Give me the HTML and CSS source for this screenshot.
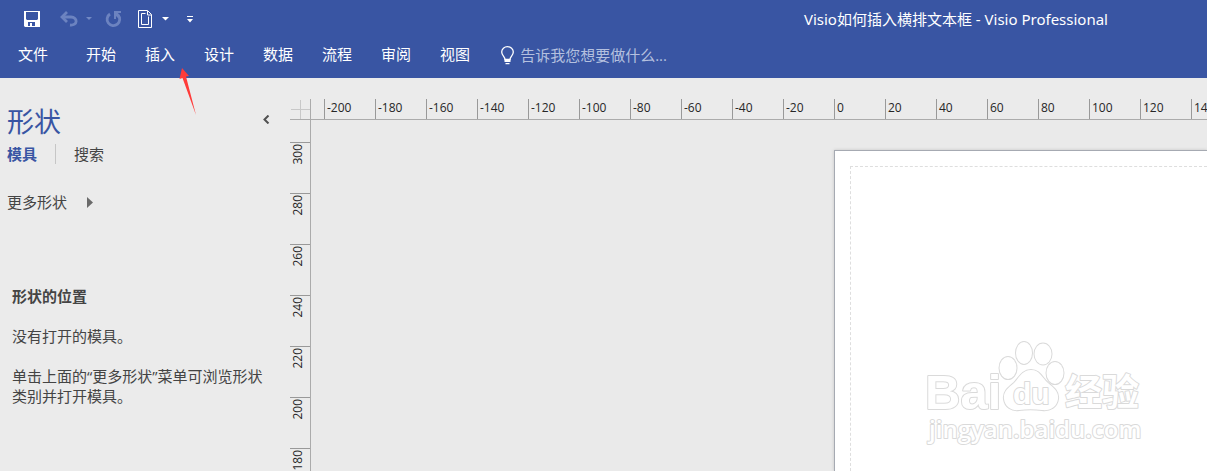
FILE: index.html
```html
<!DOCTYPE html>
<html lang="zh-CN">
<head>
<meta charset="utf-8">
<title>Visio如何插入横排文本框 - Visio Professional</title>
<link rel="stylesheet" href="styles.css">
</head>
<body>
<header class="ribbon">
  <div class="titlebar">
    <div class="quick">
      <button class="tool save" aria-label="保存"><svg width="16" height="16" viewBox="0 0 16 16"><path fill="#fff" fill-rule="evenodd" d="M0 0h16v16H1l-1-1zM2 1v7l1 1h10l1-1V1zM4 11v4h2v-3h2v3h3v-4z"/></svg></button>
      <button class="tool undo" aria-label="撤消"><svg width="32" height="16" viewBox="0 0 32 16"><g fill="none" stroke="#6c83c0" stroke-width="2.8"><path d="M2 6h9c7 0 7 9-1 8"/><path d="M7 1L2 6l5 5"/></g><path fill="#7389c4" d="M26 6h6l-3 3z"/></svg></button>
      <button class="tool redo" aria-label="重复"><svg width="17" height="17" viewBox="0 0 17 17"><path fill="none" stroke="#6c83c0" stroke-width="2.8" d="M5 3a6.300 6.300 0 1 0 8 1"/><path fill="#6c83c0" d="M9 0h7v2h-3l2 3-2 2-2-2v3H9z"/></svg></button>
      <button class="tool page-size" aria-label="页面大小"><svg width="31" height="18" viewBox="0 0 31 18"><g fill="none" stroke="#fff"><path d="M.5.5h9l4 4v13H.5z"/><path d="M9.500 1v4h4M7.500 3.500h-4v11h7v-8"/></g><path fill="#fff" d="M24 7h7l-3.500 3.500z"/></svg></button>
      <button class="tool more" aria-label="自定义快速访问工具栏"><svg width="6" height="7" viewBox="0 0 6 7"><path fill="#fff" d="M0 0h6v1H0zM0 3h6L3 6.500z"/></svg></button>
    </div>
    <h1 class="title">Visio如何插入横排文本框 - Visio Professional</h1>
  </div>
  <nav class="tabs">
    <button class="tab file">文件</button>
    <button class="tab">开始</button>
    <button class="tab">插入</button>
    <button class="tab">设计</button>
    <button class="tab">数据</button>
    <button class="tab">流程</button>
    <button class="tab">审阅</button>
    <button class="tab">视图</button>
    <label class="tell">
      <svg width="13" height="19" viewBox="0 0 13 19"><path fill="none" stroke="#fff" stroke-width="1.300" d="M4 13.500C4 10.500.7 9.500.7 6a5.800 5.300 0 0 1 11.600 0c0 3.500-3.300 4.500-3.300 7.500z"/><path fill="#fff" d="M3.500 13h6v3h-6zM4.500 17h4v1.200h-4z"/></svg>
      <input class="tell-input" type="text" aria-label="告诉我您想要做什么" placeholder="告诉我您想要做什么...">
    </label>
  </nav>
  <svg class="pointer" width="18" height="48" viewBox="0 0 18 48"><path fill="#ff3b39" d="M3 0l7 8-3 .5L17 47 3.500 10l-3 1z"/></svg>
</header>
<main class="main">
  <aside class="shapes">
    <div class="shapes-head">
      <h2 class="shapes-title">形状</h2>
      <button class="collapse" aria-label="折叠"><svg width="8" height="9" viewBox="0 0 8 9"><path fill="none" stroke="#505050" stroke-width="2" d="M6.500.5l-4 4 4 4"/></svg></button>
    </div>
    <div class="modes">
      <button class="mode active">模具</button>
      <button class="mode">搜索</button>
    </div>
    <button class="more-shapes">更多形状<svg width="6" height="11" viewBox="0 0 6 11"><path fill="#6a6a6a" d="M0 0l6 5.500L0 11z"/></svg></button>
    <section class="help">
      <h3 class="help-title">形状的位置</h3>
      <p>没有打开的模具。</p>
      <p>单击上面的“更多形状”菜单可浏览形状类别并打开模具。</p>
    </section>
  </aside>
  <section class="workspace">
    <div class="corner"><svg width="19" height="19" viewBox="0 0 19 19"><path stroke="#c8c8c8" d="M9.500 0v19M0 9.500h19"/></svg></div>
    <div class="ruler-h">
      <span>-200</span><span>-180</span><span>-160</span><span>-140</span><span>-120</span><span>-100</span><span>-80</span><span>-60</span><span>-40</span><span>-20</span><span>0</span><span>20</span><span>40</span><span>60</span><span>80</span><span>100</span><span>120</span><span>140</span>
    </div>
    <div class="ruler-v">
      <span><b>300</b></span><span><b>280</b></span><span><b>260</b></span><span><b>240</b></span><span><b>220</b></span><span><b>200</b></span><span><b>180</b></span>
    </div>
    <div class="canvas">
      <div class="sheet"><div class="margins"></div></div>
      <svg class="watermark" width="226" height="112" viewBox="0 0 226 112">
        <g class="mark">
          <text class="latin" x="5" y="72" font-size="49">Bai</text>
          <ellipse cx="88" cy="31" rx="8.500" ry="11"/><ellipse cx="104" cy="16" rx="8" ry="11"/><ellipse cx="123" cy="17" rx="8.500" ry="10.500"/><ellipse cx="135" cy="36" rx="8.500" ry="11"/>
          <path d="M111 33c-9 0-12 8-17 13-6 5-11 9-10 16 1 8 8 12 15 11 8-1 15-1 23 0 8 1 15-3 16-11 1-7-4-11-10-16-6-5-8-13-17-13z"/>
          <text class="latin" x="93" y="67" font-size="30">du</text>
          <text class="cjk" x="145" y="69" font-size="37">经验</text>
          <text class="site" x="9" y="101" font-size="24">jingyan.baidu.com</text>
        </g>
      </svg>
    </div>
  </section>
</main>
</body>
</html>
```
FILE: styles.css
```css
* { box-sizing: border-box; }
body {
  margin: 0;
  height: 100vh;
  display: flex;
  flex-direction: column;
  overflow: hidden;
  background: #ebebeb;
  color: #444;
  font: 15px/20px "Open Sans", "Noto Sans CJK SC", sans-serif;
}
h1, h2, h3, p { margin: 0; font-size: inherit; font-weight: 400; }
button { margin: 0; padding: 0; border: 0; background: none; color: inherit; font: inherit; }
svg { display: block; }

.ribbon { position: relative; flex: none; background: #3955a3; color: #fff; padding-bottom: 12px; }
.titlebar { display: flex; align-items: center; justify-content: space-between; height: 38px; padding: 0 99px 0 24px; }
.quick { display: flex; align-items: center; }
.undo { margin-left: 20px; }
.redo { margin-left: 13px; }
.page-size { margin-left: 16px; }
.more { margin-left: 18px; }
.title { font-family: "Noto Sans", "Noto Sans CJK SC", sans-serif; font-size: 15px; }
.tabs { display: flex; align-items: center; gap: 29px; height: 28px; padding: 4px 0 0 18px; }
.file { margin-right: 9px; }
.tell { display: flex; align-items: center; gap: 6px; margin-left: 2px; padding-top: 2px; }
.tell-input { width: 200px; padding: 0; border: 0; outline: 0; background: none; color: #fff; font: inherit; }
.tell-input::placeholder { color: #b4c0df; opacity: 1; }
.pointer { position: absolute; left: 179px; top: 68px; z-index: 1; }

.main { flex: 1; display: flex; min-height: 0; }
.shapes { flex: none; width: 290px; padding: 26px 20px 0 7px; }
.shapes-head { display: flex; align-items: center; justify-content: space-between; height: 36px; }
.shapes-title { color: #3955a3; font-size: 27px; line-height: 36px; }
.collapse svg { margin-bottom: 6px; }
.modes { display: flex; align-items: center; margin-top: 4px; }
.mode + .mode { border-left: 1px solid #c6c6c6; margin-left: 18px; padding-left: 18px; }
.active { color: #3955a3; font-weight: 700; }
.more-shapes { display: flex; align-items: center; gap: 20px; margin-top: 28px; }
.help { padding-left: 5px; margin-top: 74px; margin-right: -3px; display: grid; gap: 20px; }
.help-title { font-weight: 700; }

.workspace { flex: 1; min-width: 0; margin-top: 21px; display: grid; grid-template: 21px 1fr / 21px 1fr; }
.corner { border-right: 1px solid #ababab; border-bottom: 1px solid #ababab; padding: 1px 0 0 1px; overflow: hidden; }
.ruler-h { display: flex; overflow: hidden; padding-left: 13px; border-bottom: 1px solid #ababab; }
.ruler-h span { flex: none; width: 51px; padding-left: 2px; border-left: 1px solid #999; color: #262626; font-size: 12px; line-height: 17px; }
.ruler-v { overflow: hidden; padding-top: 22px; border-right: 1px solid #ababab; }
.ruler-v span { display: flex; height: 51px; padding-top: 1px; border-top: 1px solid #999; }
.ruler-v b { align-self: flex-start; writing-mode: vertical-rl; transform: rotate(180deg); color: #262626; font-size: 12px; font-weight: 400; line-height: 16px; }
.canvas { position: relative; overflow: hidden; padding: 30px 0 0 523px; background: #eaeaea; }
.sheet { height: 100%; padding: 15px 0 0 15px; background: #fff; border: solid #a6aab2; border-width: 1px 0 0 1px; box-shadow: 0 0 3px #c4c4c4; }
.margins { height: 100%; border: dashed #dedede; border-width: 1px 0 0 1px; }
.watermark { position: absolute; right: 61px; bottom: 22px; }
.mark { fill: #fff; stroke: #dadada; stroke-width: 2; stroke-linejoin: round; paint-order: stroke; }
.latin { font-family: "Liberation Sans", sans-serif; font-weight: 700; }
.cjk { font-family: "Noto Sans CJK SC", sans-serif; font-weight: 700; }
.site { font-family: "Open Sans", sans-serif; font-weight: 600; }
```
